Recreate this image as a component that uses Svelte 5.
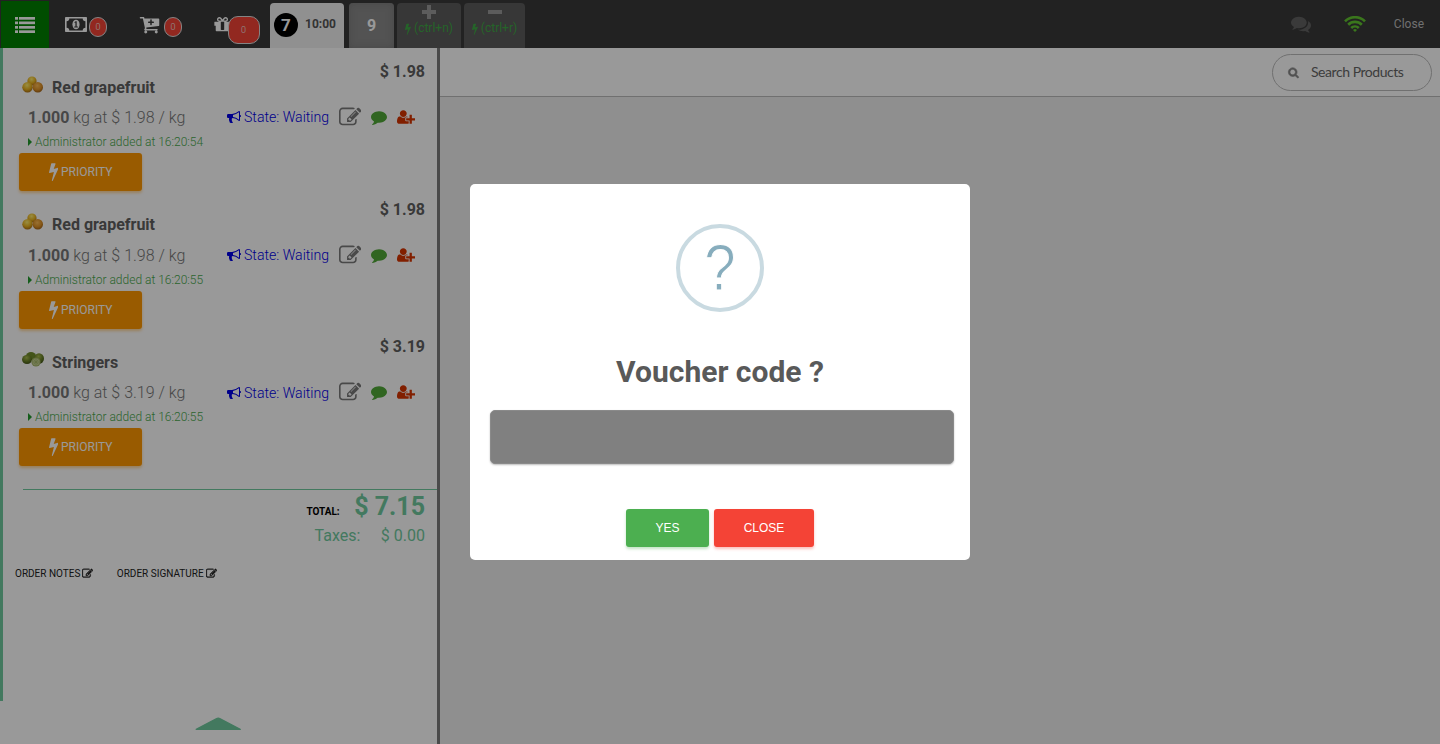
<script>
  const items = [
    { name: 'Red grapefruit', price: '1.98', time: '16:20:54', fruit: 'orange' },
    { name: 'Red grapefruit', price: '1.98', time: '16:20:55', fruit: 'orange' },
    { name: 'Stringers', price: '3.19', time: '16:20:55', fruit: 'lime' }
  ];
  const icons = {
    edit: 'M888 1184l116-116-152-152-116 116v56h96v96h56zm440-720q-16-16-33 1l-350 350q-17 17-1 33t33-1l350-350q17-17 1-33zm80 594v190q0 119-84.5 203.5t-203.5 84.5h-832q-119 0-203.5-84.5t-84.5-203.5v-832q0-119 84.5-203.5t203.5-84.5h832q63 0 117 25 15 7 18 23 3 17-9 29l-49 49q-14 14-32 8-23-6-45-6h-832q-66 0-113 47t-47 113v832q0 66 47 113t113 47h832q66 0 113-47t47-113v-126q0-13 9-22l64-64q15-15 35-7t20 29zm-96-738l288 288-672 672h-288v-288zm444 132l-92 92-288-288 92-92q28-28 68-28t68 28l152 152q28 28 28 68t-28 68z',
    comment: 'M1792 896q0 174-120 321.5t-326 233-450 85.5q-70 0-145-8-198 175-460 242-49 14-114 22-17 2-30.5-9t-17.5-29v-1q-3-4-.5-12t2-10 4.5-9.5l6-9 7-8.5 8-9q7-8 31-34.5t34.5-38 31-39.5 32.5-51 27-59 26-76q-157-89-247.5-220t-90.5-281q0-130 71-248.5t191-204.5 286-136.5 348-50.5q244 0 450 85.5t326 233 120 321.5z',
    comments: 'M1408 768q0 139-94 257t-256.5 186.5-353.5 68.5q-86 0-176-16-124 88-278 128-36 9-86 16h-3q-11 0-20.5-8t-11.5-21q-1-3-1-6.5t.5-6.5 2-6l2.5-5 3.5-5.5 4-5 4.5-5 4-4.5q5-6 23-25t26-29.5 22.5-29 25-38.5 20.5-44q-124-72-195-177t-71-224q0-139 94-257t256.5-186.5 353.5-68.5 353.5 68.5 256.5 186.5 94 257zm384 256q0 120-71 224.5t-195 176.5q10 24 20.5 44t25 38.5 22.5 29 26 29.5 23 25q1 1 4 4.5t4.5 5 4 5 3.5 5.5l2.5 5 2 6 .5 6.5-1 6.5q-3 14-13 22t-22 7q-50-7-86-16-154-40-278-128-90 16-176 16-271 0-472-132 58 4 88 4 161 0 309-45t264-129q125-92 192-212t67-254q0-77-23-152 129 71 204 178t75 230z',
    bolt: 'M1333 566q18 20 7 44l-540 1157q-13 25-42 25-4 0-14-2-17-5-25.5-19t-4.5-30l197-808-406 101q-4 1-12 1-18 0-31-11-18-15-13-39l201-825q4-14 16-23t28-9h328q19 0 32 12.5t13 29.5q0 8-5 18l-171 463 396-98q8-2 12-2 19 0 34 15z',
    search: 'M1216 832q0-185-131.5-316.5t-316.5-131.5-316.5 131.5-131.5 316.5 131.5 316.5 316.5 131.5 316.5-131.5 131.5-316.5zm512 832q0 52-38 90t-90 38q-54 0-90-38l-343-342q-179 124-399 124-143 0-273.5-55.5t-225-150-150-225-55.5-273.5 55.5-273.5 150-225 225-150 273.5-55.5 273.5 55.5 225 150 150 225 55.5 273.5q0 220-124 399l343 343q37 37 37 90z',
    userPlus: 'M704 896q-159 0-271.5-112.5t-112.5-271.5 112.5-271.5 271.5-112.5 271.5 112.5 112.5 271.5-112.5 271.5-271.5 112.5zm960 128h352q13 0 22.5 9.5t9.5 22.5v192q0 13-9.5 22.5t-22.5 9.5h-352v352q0 13-9.5 22.5t-22.5 9.5h-192q-13 0-22.5-9.5t-9.5-22.5v-352h-352q-13 0-22.5-9.5t-9.5-22.5v-192q0-13 9.5-22.5t22.5-9.5h352v-352q0-13 9.5-22.5t22.5-9.5h192q13 0 22.5 9.5t9.5 22.5v352zm-736 224q0 52 38 90t90 38h256v238q-68 50-171 50h-874q-121 0-194-69t-73-190q0-53 3.5-103.5t14-109 26.5-108.5 43-97.5 62-81 85.5-53.5 111.5-20q19 0 39 17 79 61 154.5 91.5t164.5 30.5 164.5-30.5 154.5-91.5q20-17 39-17 132 0 217 96h-223q-52 0-90 38t-38 90v192z',
    bullhorn: 'M1664 640q53 0 90.5 37.5t37.5 90.5-37.5 90.5-90.5 37.5v384q0 52-38 90t-90 38q-417-347-812-380-58 19-91 66t-31 100.5 40 92.5q-20 33-23 65.5t6 58 33.5 55 48 50 61.5 50.5q-29 58-111.5 83t-168.5 11.5-132-55.5q-7-23-29.5-87.5t-32-94.5-23-89-15-101 3.5-98.5 22-110.5h-122q-66 0-113-47t-47-113v-192q0-66 47-113t113-47h480q435 0 896-384 52 0 90 38t38 90v384zm-128 604v-954q-394 302-768 343v270q377 42 768 341z',
    gift: 'M1056 1356v-716h-320v716q0 25 18 38.5t46 13.5h192q28 0 46-13.5t18-38.5zm-456-844h195l-126-161q-26-31-69-31-40 0-68 28t-28 68 28 68 68 28zm688-96q0-40-28-68t-68-28q-43 0-69 31l-125 161h194q40 0 68-28t28-68zm376 256v320q0 14-9 23t-23 9h-96v416q0 40-28 68t-68 28h-1088q-40 0-68-28t-28-68v-416h-96q-14 0-23-9t-9-23v-320q0-14 9-23t23-9h440q-93 0-158.5-65.5t-65.5-158.5 65.5-158.5 158.5-65.5q107 0 168 77l128 165 128-165q61-77 168-77 93 0 158.5 65.5t65.5 158.5-65.5 158.5-158.5 65.5h440q14 0 23 9t9 23z',
    cartPlus: 'M1280 704q0-26-19-45t-45-19h-128v-128q0-26-19-45t-45-19-45 19-19 45v128h-128q-26 0-45 19t-19 45 19 45 45 19h128v128q0 26 19 45t45 19 45-19 19-45v-128h128q26 0 45-19t19-45zm-576 832q0 53-37.5 90.5t-90.5 37.5-90.5-37.5-37.5-90.5 37.5-90.5 90.5-37.5 90.5 37.5 37.5 90.5zm896 0q0 53-37.5 90.5t-90.5 37.5-90.5-37.5-37.5-90.5 37.5-90.5 90.5-37.5 90.5 37.5 37.5 90.5zm128-1088v512q0 24-16 42.5t-41 21.5l-1044 122q1 7 4.5 21.5t6 26.5 2.5 22q0 16-24 64h920q26 0 45 19t19 45-19 45-45 19h-1024q-26 0-45-19t-19-45q0-14 11-39.5t29.5-59.5 20.5-38l-177-823h-204q-26 0-45-19t-19-45 19-45 45-19h256q16 0 28.5 6.5t20 15.5 13 24.5 7.5 26.5 5.5 29.5 4.5 25.5h1201q26 0 45 19t19 45z'
  };
</script>

{#snippet icon(name, size)}
  <svg width={name === 'userPlus' ? size * 8 / 7 : size} height={size} viewBox={name === 'userPlus' ? '0 0 2048 1792' : '0 0 1792 1792'} fill="currentColor"><path d={icons[name]} /></svg>
{/snippet}

{#snippet bolt(size)}
  <svg width={size / 2} height={size} viewBox="448 0 896 1792" fill="currentColor"><path d={icons.bolt} /></svg>
{/snippet}

<div class="app">
  <header>
    <div class="menu">
      <svg width="20" height="16" viewBox="0 0 20 16" fill="currentColor">
        {#each [0, 4.5, 9, 13.3] as y}
          <rect x="0" {y} width="3" height="2.7" /><rect x="4" {y} width="16" height="2.7" />
        {/each}
      </svg>
    </div>
    <div class="tool money">
      <svg width="22" height="15" viewBox="0 0 22 15">
        <rect width="22" height="15" rx=".8" fill="currentColor" />
        <path d="M4.3 1.6h13.4a2.8 2.8 0 0 0 2.7 2.7v6.4a2.8 2.8 0 0 0-2.7 2.7H4.3a2.8 2.8 0 0 0-2.7-2.7V4.3a2.8 2.8 0 0 0 2.7-2.7z" fill="#393939" />
        <ellipse cx="11" cy="7.5" rx="3.6" ry="4.8" fill="currentColor" />
        <path d="M9.4 5.2l1.2-1h1.1v5.2h1.2v1H9.2v-1h1.2V5.6l-.6.4z" fill="#393939" />
      </svg>
      <span class="badge">0</span>
    </div>
    <div class="tool cart">{@render icon('cartPlus', 21)}<span class="badge">0</span></div>
    <div class="tool gift">{@render icon('gift', 19)}<span class="badge large">0</span></div>
    <div class="tab active"><span class="num">7</span><b>10:00</b></div>
    <div class="tab nine">9</div>
    <div class="tab key">
      <svg width="14" height="14" viewBox="0 0 14 14"><path d="M7 0v14M0 7h14" stroke="#999" stroke-width="4" /></svg>
      <span>{@render bolt(12)} (ctrl+n)</span>
    </div>
    <div class="tab key minus">
      <svg width="14" height="14" viewBox="0 0 14 14"><path d="M0 7h14" stroke="#999" stroke-width="4" /></svg>
      <span>{@render bolt(12)} (ctrl+r)</span>
    </div>
    <div class="status">
      <span class="chat">{@render icon('comments', 20)}</span>
      <svg class="wifi" width="22" height="16" viewBox="0 0 22 16" fill="none" stroke="#61c52f" stroke-width="2.6">
        <path d="M1 5.3a14.2 14.2 0 0 1 20 0M4.2 8.7a9.7 9.7 0 0 1 13.6 0M7.2 12a5.4 5.4 0 0 1 7.6 0" />
        <path d="M11 16l-2-2.1q2-1.7 4 0z" fill="#61c52f" stroke="none" />
      </svg>
      <span>Close</span>
    </div>
  </header>

  <main>
    <section class="order">
      <div class="lines">
        {#each items as item}
          <article>
            <div class="price">$ {item.price}</div>
            <div class="name">
              <svg width="22" height="18" viewBox="0 0 22 18">
                {#if item.fruit === 'orange'}
                  <circle cx="10" cy="5" r="4.6" fill="url(#gold)" />
                  <circle cx="5.5" cy="11.2" r="5.2" fill="url(#gold)" />
                  <circle cx="15.8" cy="11.2" r="5.2" fill="url(#amber)" />
                {:else}
                  <ellipse cx="9" cy="5" rx="5" ry="4" fill="#718c2b" />
                  <ellipse cx="5" cy="8.5" rx="5" ry="4.5" fill="url(#lime)" />
                  <ellipse cx="17" cy="7.5" rx="5" ry="5.2" fill="url(#lime)" />
                  <circle cx="14" cy="11" r="4.6" fill="#a3b466" />
                  <circle cx="14" cy="11" r="3.6" fill="#c3cf91" />
                  <path d="M14 7.6v6.8M10.7 11h6.6M11.7 8.7l4.6 4.6M16.3 8.7l-4.6 4.6" stroke="#9fb263" stroke-width=".6" />
                {/if}
              </svg>
              <b>{item.name}</b>
            </div>
            <div class="detail">
              <span class="qty"><b>1.000</b> kg at $ {item.price} / kg</span>
              <span class="state">{@render icon('bullhorn', 14)}State: Waiting</span>
              <span class="pen">{@render icon('edit', 22.5)}</span>
              <span class="talk">{@render icon('comment', 16)}</span>
              <span class="user">{@render icon('userPlus', 16)}</span>
            </div>
            <div class="added"><i></i>Administrator added at {item.time}</div>
            <button class="priority">{@render bolt(19)}PRIORITY</button>
          </article>
        {/each}
        <div class="totals">
          <div class="total"><b>TOTAL:</b><strong>$ 7.15</strong></div>
          <div class="taxes"><span>Taxes:</span><span>$ 0.00</span></div>
        </div>
        <div class="links">
          <span>ORDER NOTES {@render icon('edit', 11)}</span>
          <span>ORDER SIGNATURE {@render icon('edit', 11)}</span>
        </div>
      </div>
      <svg class="up" width="48" height="14" viewBox="0 0 48 14"><path d="M2.2 12.3L22.2 1.8q2-1.1 4 0L46.2 12.3z" fill="#70ca9e" stroke="#70ca9e" stroke-width="1.4" stroke-linejoin="round" /></svg>
    </section>
    <section class="products">
      <div class="bar">
        <label class="search">{@render icon('search', 11)}<span>Search Products</span></label>
      </div>
    </section>
  </main>

  <svg width="0" height="0" class="defs">
    <defs>
      <radialGradient id="gold" cx=".45" cy=".3" r=".75"><stop offset="0" stop-color="#ffed70" /><stop offset=".55" stop-color="#eab420" /><stop offset="1" stop-color="#a46612" /></radialGradient>
      <radialGradient id="amber" cx=".45" cy=".35" r=".75"><stop offset="0" stop-color="#ffbd55" /><stop offset=".55" stop-color="#df9227" /><stop offset="1" stop-color="#8e5210" /></radialGradient>
      <radialGradient id="lime" cx=".45" cy=".3" r=".75"><stop offset="0" stop-color="#a6b94d" /><stop offset=".6" stop-color="#657c25" /><stop offset="1" stop-color="#3d4f18" /></radialGradient>
    </defs>
  </svg>

  <div class="overlay">
    <div class="modal">
      <div class="question"><span>?</span></div>
      <h2>Voucher code ?</h2>
      <div class="field"></div>
      <div class="actions"><button class="yes">YES</button><button class="no">CLOSE</button></div>
    </div>
  </div>
</div>

<style>
  :global(body) { margin: 0; }
  * { box-sizing: border-box; }
  svg { display: block; flex: none; }
  button { border: 0; font-family: Roboto, sans-serif; }
  .app { position: relative; width: 1440px; height: 744px; overflow: hidden; display: flex; flex-direction: column; font-family: Roboto, sans-serif; }
  header { height: 48px; flex: none; background: #393939; display: flex; color: #fff; }
  .menu { width: 48px; margin: 1px 0 0 1px; background: #008000; display: flex; align-items: center; justify-content: center; }
  .tool { display: flex; align-items: center; height: 48px; width: 75px; }
  .money { padding-left: 16px; gap: 2px; }
  .cart { padding-left: 15px; gap: 4px; }
  .gift { padding-left: 14px; width: 71px; }
  .badge { width: 18px; height: 20px; margin-top: 6px; border: 1px solid #ddd; border-radius: 10px; background: #f44336; color: #eee; font-size: 9px; font-weight: 300; display: flex; align-items: center; justify-content: center; }
  .badge.large { width: 32px; height: 28px; margin: 12px 0 0 -4.5px; position: relative; flex: none; }
  .tab { height: 45px; margin-top: 3px; border-radius: 4px 4px 0 0; display: flex; align-items: center; }
  .active { width: 74px; background: #f0f0f0; padding: 0 0 2px 4px; gap: 7px; color: #555; font-size: 12px; }
  .num { width: 24px; height: 24px; border-radius: 50%; background: #000; color: #fff; font-size: 17px; font-weight: 700; display: flex; align-items: center; justify-content: center; }
  .active b { padding-bottom: 2px; }
  .nine { width: 45px; margin-left: 5px; justify-content: center; background: #8a8a8a; font-weight: 700; box-shadow: inset 0 0 7px #777; }
  .key { width: 64px; margin-left: 3px; flex-direction: column; background: #5c5c5c; color: #3fa745; font-size: 12px; padding-top: 2px; gap: 2px; }
  .key.minus { width: 61px; }
  .key span { display: flex; gap: 3px; align-items: center; line-height: 15px; white-space: nowrap; }
  .status { margin-left: auto; display: flex; align-items: center; padding-right: 16px; color: #bbb; font-size: 12px; }
  .chat { color: #626262; }
  .wifi { margin: 0 28px 0 33px; }
  main { flex: 1; display: flex; min-height: 0; }
  .order { width: 440px; border-right: 3px solid #7c7c7c; background: #fff; display: flex; flex-direction: column; }
  .lines { height: 653px; border-left: 3px solid #70ca9e; }
  article { height: 137.6px; padding: 14px 12px 0 16px; }
  .price { text-align: right; font-size: 16px; line-height: 19px; font-weight: 700; color: #606060; }
  .name { display: flex; align-items: center; margin: -7px 0 0 3px; height: 26px; gap: 8px; color: #606060; font-size: 16px; }
  .name svg { margin-top: -5px; }
  .detail { display: flex; align-items: center; margin-top: .4px; height: 33.6px; padding-left: 9px; font-weight: 300; }
  .qty { width: 199px; color: #777; font-size: 16px; white-space: nowrap; padding-top: .9px; }
  .qty b { font-weight: 700; }
  .state { width: 111.5px; display: flex; align-items: center; gap: 3px; color: #0000e8; font-size: 14.1px; white-space: nowrap; padding-top: .5px; }
  .pen { width: 32.5px; color: #7a7a7a; }
  .talk { width: 26px; color: #50a838; }
  .user { color: #d83400; }
  .added { display: flex; align-items: center; gap: 3px; padding-left: 9px; height: 16px; color: #49a94d; font-size: 12px; font-weight: 300; }
  .added i { border: 4px solid transparent; border-left-color: #239b2e; border-right: 0; }
  .priority { margin-top: 3px; width: 123px; height: 38px; border-radius: 3px; background: #ff9800; color: #fff; font-size: 12px; display: flex; align-items: center; justify-content: center; gap: 3px; box-shadow: 0 2px 3px #ff980066; }
  .priority svg { margin-top: -1px; }
  .totals { margin: 28px 0 0 20px; border-top: 1px solid #70ca9e; padding-right: 12px; color: #70ca9e; }
  .total { display: flex; justify-content: flex-end; align-items: baseline; gap: 14.5px; height: 31px; }
  .total b { color: #000; font-size: 10px; }
  .total strong { font-size: 25px; line-height: 34px; }
  .taxes { display: flex; justify-content: flex-end; gap: 20.5px; line-height: 30px; font-size: 16px; }
  .links { display: flex; gap: 23.4px; padding: 16px 0 0 12px; color: #222; font-size: 10px; line-height: 14px; }
  .links span { display: flex; align-items: center; gap: 2px; }
  .links svg { stroke: currentColor; stroke-width: 60; }
  .up { margin: 16px 0 0 194px; }
  .products { flex: 1; background: #eee; }
  .bar { height: 49px; background: #fff; border-bottom: 1px solid #bbb; padding: 6px 8px; display: flex; justify-content: flex-end; }
  .search { width: 160px; height: 37px; border: 1px solid #bbb; border-radius: 19px; display: flex; align-items: center; padding-left: 15px; gap: 12px; color: #888; font: 14px Lato, sans-serif; letter-spacing: -.45px; }
  .search svg { stroke: currentColor; stroke-width: 110; overflow: visible; }
  .search span { color: #666; margin-top: -2px; }
  .defs { position: absolute; }
  .overlay { position: absolute; inset: 0; background: rgba(0, 0, 0, .4); display: flex; align-items: center; justify-content: center; }
  .modal { width: 500px; height: 376px; border-radius: 5px; background: #fff; display: flex; flex-direction: column; align-items: center; padding: 40px 16px 0 20px; }
  .question { width: 88px; height: 88px; margin-right: 4px; flex: none; border: 4px solid #c9dae1; border-radius: 50%; color: #87adbd; font: 64px/80px "Liberation Sans", Arial, sans-serif; text-align: center; }
  .question span { display: block; -webkit-text-stroke: 1px #fff; transform: scaleX(.88); }
  h2 { margin: 40px 4px 0 0; font-size: 30px; line-height: 40px; color: #595959; font-weight: 700; }
  .field { align-self: stretch; height: 54px; flex: none; margin-top: 18px; border-radius: 5px; background: #808080; border: 1px solid #8a8a8a; box-shadow: 0 1px 2px #bbb; }
  .actions { display: flex; gap: 5px; margin: 45px 4px 0 0; }
  .actions button { height: 38px; border-radius: 3px; color: #fff; font: 12px "Liberation Sans", Arial, sans-serif; }
  .yes { width: 83px; background: #4caf50; box-shadow: 0 2px 3px #4caf5055; }
  .no { width: 100px; background: #f44336; box-shadow: 0 2px 3px #f4433655; }
</style>
